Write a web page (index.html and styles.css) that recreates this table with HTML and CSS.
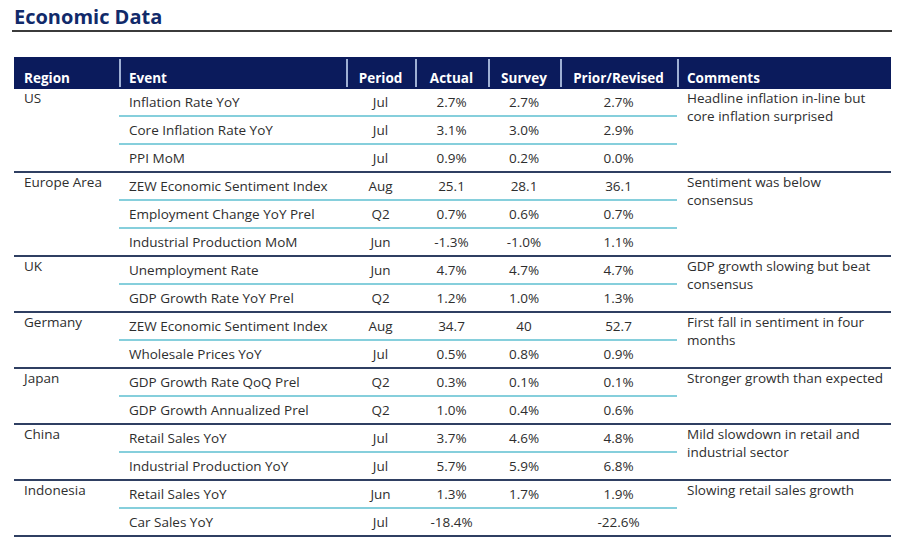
FILE: index.html
```html
<!DOCTYPE html>
<html lang="en">
<head>
<meta charset="utf-8">
<title>Economic Data</title>
<link rel="stylesheet" href="styles.css">
</head>
<body>
<div class="page">
  <h1 class="title">Economic Data</h1>
  <table class="data">
    <colgroup>
      <col class="c-region"><col class="c-event"><col class="c-period"><col class="c-actual"><col class="c-survey"><col class="c-prior"><col class="c-comments">
    </colgroup>
    <thead>
      <tr>
        <th class="left first">Region</th>
        <th class="left">Event</th>
        <th>Period</th>
        <th>Actual</th>
        <th>Survey</th>
        <th>Prior/Revised</th>
        <th class="left">Comments</th>
      </tr>
    </thead>
    <tbody>
      <tr>
        <td class="region" rowspan="3">US</td>
        <td class="event">Inflation Rate YoY</td><td class="num">Jul</td><td class="num">2.7%</td><td class="num">2.7%</td><td class="num">2.7%</td>
        <td class="comment" rowspan="3">Headline inflation in-line but core inflation surprised</td>
      </tr>
      <tr><td class="event">Core Inflation Rate YoY</td><td class="num">Jul</td><td class="num">3.1%</td><td class="num">3.0%</td><td class="num">2.9%</td></tr>
      <tr class="end"><td class="event">PPI MoM</td><td class="num">Jul</td><td class="num">0.9%</td><td class="num">0.2%</td><td class="num">0.0%</td></tr>

      <tr>
        <td class="region" rowspan="3">Europe Area</td>
        <td class="event">ZEW Economic Sentiment Index</td><td class="num">Aug</td><td class="num">25.1</td><td class="num">28.1</td><td class="num">36.1</td>
        <td class="comment" rowspan="3">Sentiment was below consensus</td>
      </tr>
      <tr><td class="event">Employment Change YoY Prel</td><td class="num">Q2</td><td class="num">0.7%</td><td class="num">0.6%</td><td class="num">0.7%</td></tr>
      <tr class="end"><td class="event">Industrial Production MoM</td><td class="num">Jun</td><td class="num">-1.3%</td><td class="num">-1.0%</td><td class="num">1.1%</td></tr>

      <tr>
        <td class="region" rowspan="2">UK</td>
        <td class="event">Unemployment Rate</td><td class="num">Jun</td><td class="num">4.7%</td><td class="num">4.7%</td><td class="num">4.7%</td>
        <td class="comment" rowspan="2">GDP growth slowing but beat consensus</td>
      </tr>
      <tr class="end"><td class="event">GDP Growth Rate YoY Prel</td><td class="num">Q2</td><td class="num">1.2%</td><td class="num">1.0%</td><td class="num">1.3%</td></tr>

      <tr>
        <td class="region" rowspan="2">Germany</td>
        <td class="event">ZEW Economic Sentiment Index</td><td class="num">Aug</td><td class="num">34.7</td><td class="num">40</td><td class="num">52.7</td>
        <td class="comment" rowspan="2">First fall in sentiment in four months</td>
      </tr>
      <tr class="end"><td class="event">Wholesale Prices YoY</td><td class="num">Jul</td><td class="num">0.5%</td><td class="num">0.8%</td><td class="num">0.9%</td></tr>

      <tr>
        <td class="region" rowspan="2">Japan</td>
        <td class="event">GDP Growth Rate QoQ Prel</td><td class="num">Q2</td><td class="num">0.3%</td><td class="num">0.1%</td><td class="num">0.1%</td>
        <td class="comment" rowspan="2">Stronger growth than expected</td>
      </tr>
      <tr class="end"><td class="event">GDP Growth Annualized Prel</td><td class="num">Q2</td><td class="num">1.0%</td><td class="num">0.4%</td><td class="num">0.6%</td></tr>

      <tr>
        <td class="region" rowspan="2">China</td>
        <td class="event">Retail Sales YoY</td><td class="num">Jul</td><td class="num">3.7%</td><td class="num">4.6%</td><td class="num">4.8%</td>
        <td class="comment" rowspan="2">Mild slowdown in retail and industrial sector</td>
      </tr>
      <tr class="end"><td class="event">Industrial Production YoY</td><td class="num">Jul</td><td class="num">5.7%</td><td class="num">5.9%</td><td class="num">6.8%</td></tr>

      <tr>
        <td class="region" rowspan="2">Indonesia</td>
        <td class="event">Retail Sales YoY</td><td class="num">Jun</td><td class="num">1.3%</td><td class="num">1.7%</td><td class="num">1.9%</td>
        <td class="comment" rowspan="2">Slowing retail sales growth</td>
      </tr>
      <tr class="end"><td class="event">Car Sales YoY</td><td class="num">Jul</td><td class="num">-18.4%</td><td class="num"></td><td class="num">-22.6%</td></tr>
    </tbody>
  </table>
</div>
</body>
</html>
```

FILE: styles.css
```css
html, body {
  margin: 0;
  padding: 0;
  background: #ffffff;
}

body {
  font-family: "Open Sans", "Liberation Sans", Arial, sans-serif;
  color: #2e2e2e;
  font-size: 13.5px;
}

.page {
  width: 880px;
  padding: 3px 0 0 12px;
}

.title {
  margin: 0;
  padding: 0 0 0 2px;
  font-family: "Open Sans", "Liberation Sans", sans-serif;
  font-size: 20px;
  line-height: 27px;
  font-weight: 700;
  color: #112a6a;
  border-bottom: 2px solid #3b3b3b;
}

.data {
  margin: 25px 0 0 2px;
  width: 877px;
  border-collapse: collapse;
  table-layout: fixed;
}

.c-region { width: 105px; }
.c-event { width: 227px; }
.c-period { width: 69px; }
.c-actual { width: 73px; }
.c-survey { width: 72px; }
.c-prior { width: 117px; }
.c-comments { width: 214px; }

.data th {
  background: #0b1b5c;
  color: #ffffff;
  font-weight: 700;
  font-size: 13.5px;
  height: 30px;
  padding: 0 0 2px 0;
  vertical-align: bottom;
  text-align: center;
  line-height: 17px;
  background-image: linear-gradient(#9fb0d4, #9fb0d4);
  background-size: 2px 28px;
  background-position: 0 2px;
  background-repeat: no-repeat;
}

.data th.first {
  background-image: none;
}

.data th.left {
  text-align: left;
  padding-left: 10px;
}

.data td {
  height: 26px;
  padding: 0;
  line-height: 18px;
  vertical-align: middle;
  border-bottom: 2px solid #86cfdc;
}

.data tr.end td,
.data td.region,
.data td.comment {
  border-bottom: 2px solid #2f3f62;
}

.data td.region,
.data td.comment {
  vertical-align: top;
  padding: 0 0 0 10px;
  line-height: 18px;
}

.data td.event {
  padding-left: 10px;
}

.data td.num {
  text-align: center;
}

.data td.comment {
  padding-right: 6px;
}
```
